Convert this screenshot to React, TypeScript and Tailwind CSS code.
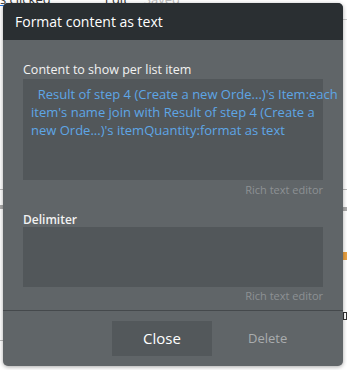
import { FC } from "react";

const font = { fontFamily: '"Open Sans", "Noto Sans", sans-serif' };

const lines = [
  "\u00a0\u00a0Result of step 4 (Create a new Orde...)'s Item:each",
  "item's name join with Result of step 4 (Create a",
  "new Orde...)'s itemQuantity:format as text",
];

const App: FC = () => {
  return (
    <div className="relative w-[347px] h-[370px] bg-white overflow-hidden" style={font}>
      {/* Page behind the dialog */}
      <div className="absolute top-[-9px] left-0 flex items-center gap-[54px] text-[13px] leading-[16px]">
        <span className="text-[#333] underline decoration-[#1a73e8]">s clicked</span>
        <span className="flex gap-[16px]">
          <span className="text-[#333]">Edit</span>
          <span className="text-[#bbb]">Saved</span>
        </span>
      </div>
      <div className="absolute top-[19px] right-0 w-[6px] h-px bg-[#ccc]" />
      <div className="absolute top-[189px] left-0 w-[4px] h-px bg-[#bbb]" />
      <div className="absolute top-[205px] left-0 w-[4px] h-[4px] bg-[#aaa]" />
      <div className="absolute top-[189px] right-0 w-[6px] h-px bg-[#bbb]" />
      <div className="absolute top-[207px] right-0 w-[6px] h-[4px] bg-[#aaa]" />
      <div className="absolute top-[252px] right-0 w-[4px] h-[8px] bg-[#e8a040]" />
      <div className="absolute top-[312px] right-0 w-[4px] h-[8px] border border-[#333]" />
      <div className="absolute top-[340px] left-0 w-[6px] h-px bg-[#bbb]" />

      {/* Dialog */}
      <div className="absolute left-[3px] top-[3px] w-[340px] h-[363px] rounded-[5px] overflow-hidden bg-[#606568] shadow-[0_1px_4px_rgba(0,0,0,0.35)] flex flex-col">
        <div className="h-[37px] bg-[#2a2f32] flex items-center px-[12px]">
          <span className="text-white text-[14px] leading-none pt-[1px]">Format content as text</span>
        </div>

        <div className="flex flex-col px-[20px] pt-[22px]">
          <span className="text-[#f2f2f2] text-[12.5px] leading-[16px] font-medium">
            Content to show per list item
          </span>
          <div className="mt-[1px] h-[101px] bg-[#52575a] pl-[8px] pt-[6px] text-[13px] leading-[18px] text-[#5ea6e6]">
            {lines.map((l) => (
              <div key={l} className="whitespace-nowrap">{l}</div>
            ))}
          </div>
          <span className="self-end text-[#8d9194] text-[11px] leading-[14px] mt-[3px]">Rich text editor</span>

          <span className="mt-[15px] text-[#f2f2f2] text-[12px] leading-[16px] font-semibold">Delimiter</span>
          <div className="mt-[-1px] h-[60px] bg-[#52575a]" />
          <span className="self-end text-[#8d9194] text-[11px] leading-[14px] mt-[2px]">Rich text editor</span>
        </div>

        <div className="mt-[7px] h-px bg-[#45494c]" />
        <div className="flex items-center pt-[10px]">
          <button className="ml-[109px] w-[100px] h-[35px] bg-[#53585b] text-white text-[15px]">Close</button>
          <button className="ml-[36px] text-[#a9acae] text-[13px]">Delete</button>
        </div>
      </div>
    </div>
  );
};

export default App;
